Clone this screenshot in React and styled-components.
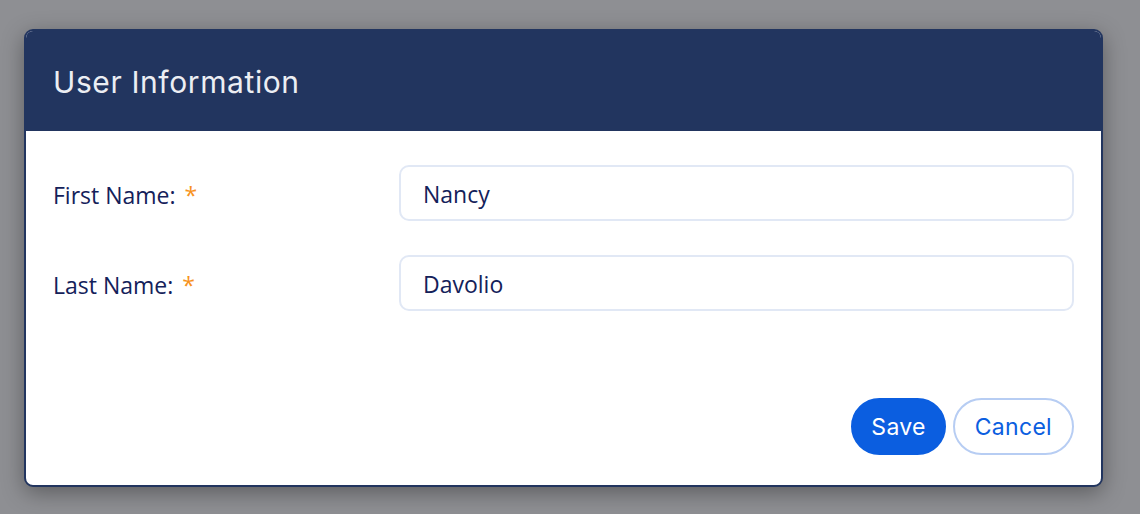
import React, { useState } from "react";
import styled, { createGlobalStyle } from "styled-components";

const GlobalStyle = createGlobalStyle`
  html, body {
    margin: 0;
    padding: 0;
    background: #8e8f93;
  }
  * { box-sizing: border-box; }
`;

const Page = styled.div`
  width: 1140px;
  height: 514px;
  padding: 29px 37px 0 24px;
  background: #8e8f93;
`;

const Dialog = styled.div`
  width: 1079px;
  background: #fff;
  border: 2px solid #22355f;
  border-radius: 9px;
  overflow: hidden;
  box-shadow: 0 6px 22px rgba(0, 0, 0, 0.35);
`;

const Header = styled.div`
  height: 100px;
  background: #22355f;
  display: flex;
  align-items: center;
  padding: 2px 27px 0;
`;

const Title = styled.h2`
  margin: 0;
  font-family: "Inter", "Noto Sans", sans-serif;
  font-weight: 400;
  font-size: 30px;
  letter-spacing: 0.6px;
  color: #eceef3;
`;

const Body = styled.div`
  padding: 34px 27px 0 27px;
  display: flex;
  flex-direction: column;
  gap: 34px;
`;

const Row = styled.div`
  display: grid;
  grid-template-columns: 346px 1fr;
  align-items: center;
`;

const Label = styled.label`
  font-family: "Open Sans", "Noto Sans", sans-serif;
  font-size: 23px;
  color: #14215a;
  padding-top: 3px;
`;

const Required = styled.span`
  color: #f7931e;
  margin-left: 9px;
`;

const Input = styled.input`
  height: 56px;
  width: 100%;
  border: 2px solid #e1e8f5;
  border-radius: 10px;
  padding: 2px 22px 0;
  font-family: "Open Sans", "Noto Sans", sans-serif;
  font-size: 23px;
  color: #14215a;
  background: #fff;
  outline: none;
`;

const Footer = styled.div`
  display: flex;
  justify-content: flex-end;
  gap: 7px;
  padding: 87px 27px 30px;
`;

const Button = styled.button`
  height: 57px;
  padding: 0 ${(p) => (p.$primary ? "18px" : "20px")};
  border-radius: 29px;
  font-family: "Inter", "Noto Sans", sans-serif;
  font-size: 23px;
  letter-spacing: 0.3px;
  cursor: pointer;
  border: 2px solid ${(p) => (p.$primary ? "#0b5ee0" : "#b7cdf3")};
  background: ${(p) => (p.$primary ? "#0b5ee0" : "#fff")};
  color: ${(p) => (p.$primary ? "#fff" : "#0b5ee0")};
`;

const App = () => {
  const [first, setFirst] = useState("Nancy");
  const [last, setLast] = useState("Davolio");
  return (
    <Page>
      <GlobalStyle />
      <Dialog>
        <Header>
          <Title>User Information</Title>
        </Header>
        <Body>
          <Row>
            <Label>
              First Name:<Required>*</Required>
            </Label>
            <Input value={first} onChange={(e) => setFirst(e.target.value)} />
          </Row>
          <Row>
            <Label>
              Last Name:<Required>*</Required>
            </Label>
            <Input value={last} onChange={(e) => setLast(e.target.value)} />
          </Row>
        </Body>
        <Footer>
          <Button $primary>Save</Button>
          <Button>Cancel</Button>
        </Footer>
      </Dialog>
    </Page>
  );
};

export default App;
